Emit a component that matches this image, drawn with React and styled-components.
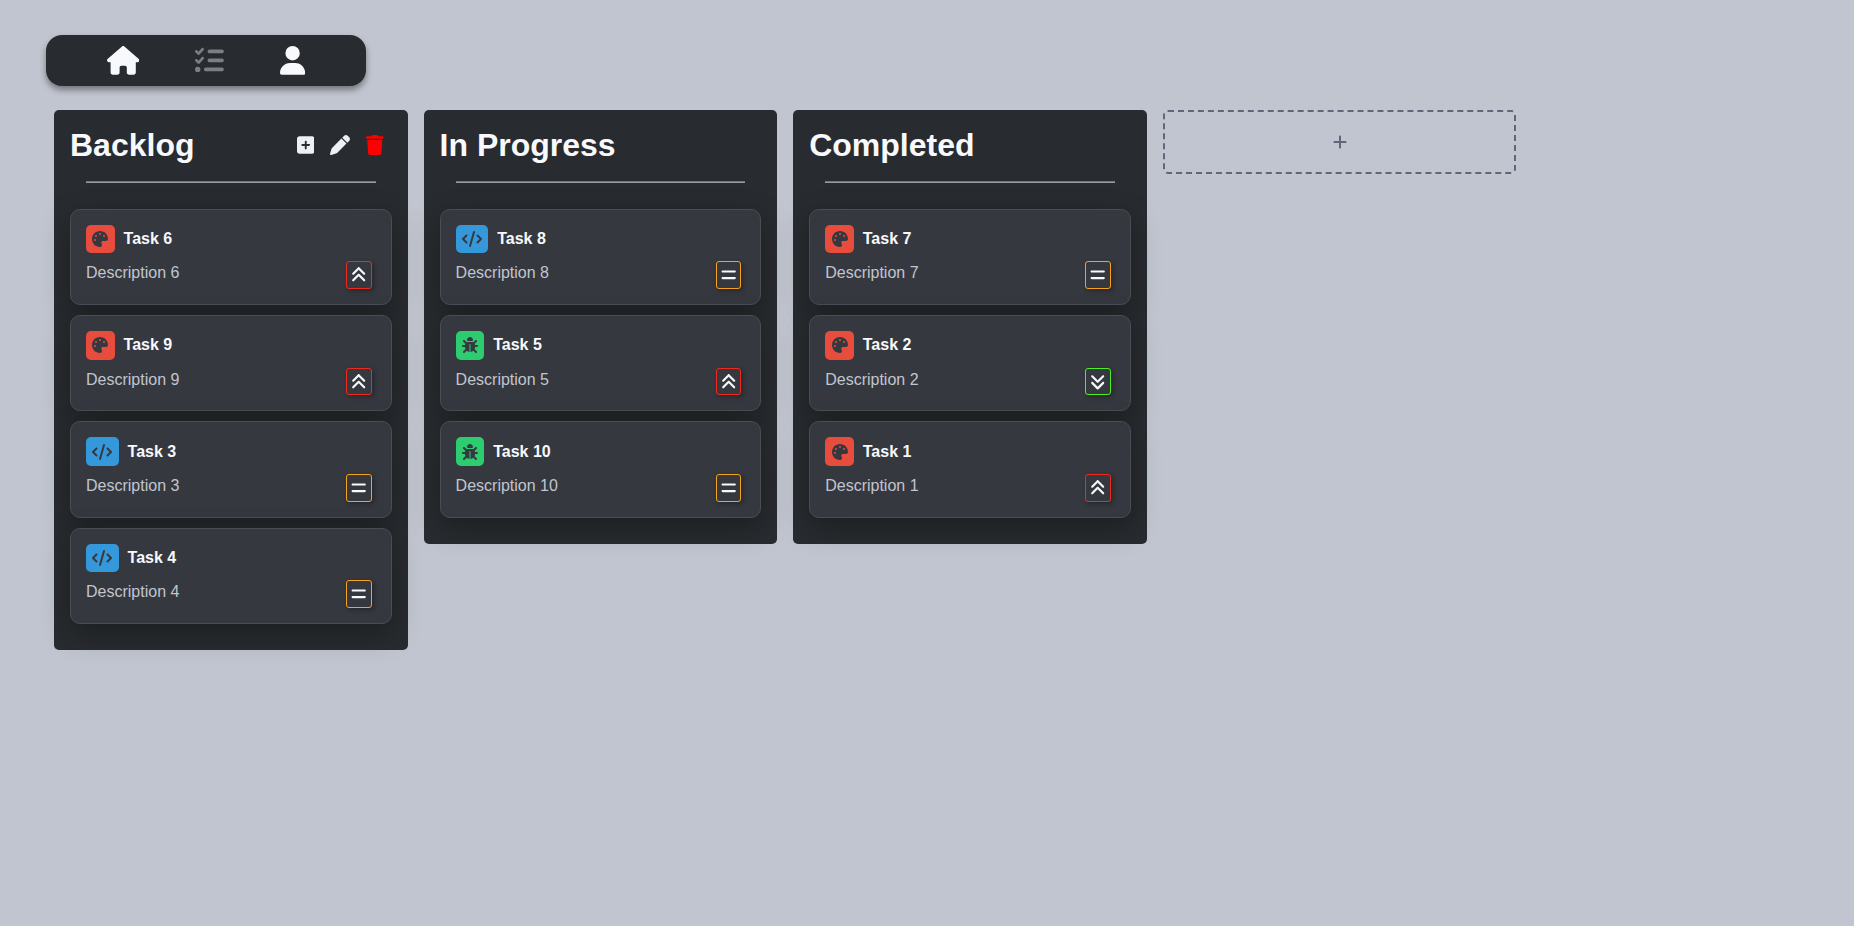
import React from "react";
import styled, { createGlobalStyle } from "styled-components";
import {
  FaHouse,
  FaListCheck,
  FaUser,
  FaSquarePlus,
  FaPen,
  FaTrash,
  FaPalette,
  FaCode,
  FaBug,
  FaAnglesUp,
  FaAnglesDown,
  FaEquals,
  FaPlus,
} from "react-icons/fa6";

const GlobalStyle = createGlobalStyle`
  * { box-sizing: border-box; margin: 0; padding: 0; }
  body {
    background: #c1c5cf;
    color: #f8f9fc;
    font-family: "Liberation Sans", Arial, sans-serif;
    font-size: 16px;
    min-height: 100vh;
  }
`;

/* Holds one glyph; $ratio is the glyph's width in em. */
const Glyph = styled.span`
  display: block;
  font-size: ${(p) => p.$size}px;
  width: ${(p) => p.$ratio ?? 1}em;
  height: 1em;

  svg {
    display: block;
    width: 100%;
    height: 100%;
  }
`;

const Page = styled.div`
  padding: 35px 46px;
`;

const NavBar = styled.nav`
  display: flex;
  align-items: center;
  justify-content: space-between;
  width: 320px;
  height: 51px;
  padding: 0 61px;
  border-radius: 16px;
  background: #282b2f;
  box-shadow: 0 4px 6px rgba(0, 0, 0, 0.4);
`;

const NavItem = styled.a`
  color: ${(p) => (p.$muted ? "#7b8087" : "#f8f9fc")};
`;

const Board = styled.main`
  display: flex;
  align-items: flex-start;
  gap: 16px;
  padding: 24px 8px;
`;

const Column = styled.section`
  width: 353.6px;
  padding: 16px 16px 26px;
  border-radius: 5px;
  background: #282b2f;
`;

const ColumnHeader = styled.header`
  display: flex;
  align-items: center;
  justify-content: space-between;
  height: 38px;
  padding-right: 8px;
`;

const ColumnTitle = styled.h1`
  margin-top: 1px;
  font-size: 32px;
  line-height: 37px;
  font-weight: 700;
`;

const Actions = styled.div`
  display: flex;
  align-items: center;
  gap: 16px;
`;

const Action = styled.button`
  border: 0;
  background: none;
  color: ${(p) => (p.$danger ? "#ff0000" : "#eff0f4")};
`;

const Divider = styled.hr`
  height: 2px;
  margin: 17px 16px 25.6px;
  border: 0;
  border-top: 1px solid #767676;
  background: #9a9a9a;
`;

const CardList = styled.div`
  display: flex;
  flex-direction: column;
  gap: 10px;
`;

const Card = styled.article`
  height: 96.35px;
  padding: 15px;
  border: 1px solid #494d54;
  border-radius: 10px;
  background: #36383f;
  box-shadow: 0 10px 30px rgba(0, 0, 0, 0.28);
`;

const CardHeader = styled.div`
  display: flex;
  align-items: center;
  gap: 8.8px;
  height: 28.8px;
`;

const TypeBadge = styled.span`
  padding: 6.4px;
  border-radius: 5px;
  background: ${(p) => p.$color};
  color: #36383f;
`;

const CardTitle = styled.h2`
  font-size: 16px;
  line-height: 18px;
  font-weight: 700;
`;

const CardBody = styled.div`
  display: flex;
  align-items: flex-start;
  justify-content: space-between;
  padding: 7.9px 4px 0 0;
`;

const Description = styled.p`
  margin-top: 3px;
  line-height: 18px;
  color: #c1c5cf;
`;

const PriorityBadge = styled.span`
  padding: 4px;
  border: 1px solid ${(p) => p.$color};
  border-radius: 3px;
  box-shadow: 2px 2px 5px rgba(0, 0, 0, 0.3);
`;

const AddColumn = styled.button`
  display: flex;
  align-items: center;
  justify-content: center;
  width: 353.6px;
  height: 64px;
  border: 2px dashed #62667a;
  border-radius: 5px;
  background: none;
  color: #62667a;
`;

const types = {
  design: { color: "#e74c3c", Icon: FaPalette, ratio: 1 },
  code: { color: "#3498db", Icon: FaCode, ratio: 1.25 },
  bug: { color: "#2ecc71", Icon: FaBug, ratio: 1 },
};

const priorities = {
  high: { color: "#f0281e", Icon: FaAnglesUp },
  medium: { color: "#f5a31a", Icon: FaEquals },
  low: { color: "#4cf01e", Icon: FaAnglesDown },
};

const columns = [
  {
    title: "Backlog",
    active: true,
    tasks: [
      [6, "design", "high"],
      [9, "design", "high"],
      [3, "code", "medium"],
      [4, "code", "medium"],
    ],
  },
  {
    title: "In Progress",
    tasks: [
      [8, "code", "medium"],
      [5, "bug", "high"],
      [10, "bug", "medium"],
    ],
  },
  {
    title: "Completed",
    tasks: [
      [7, "design", "medium"],
      [2, "design", "low"],
      [1, "design", "high"],
    ],
  },
];

function TaskCard({ id, type, priority }) {
  const { color, Icon, ratio } = types[type];
  const { color: edge, Icon: PriorityIcon } = priorities[priority];
  return (
    <Card>
      <CardHeader>
        <TypeBadge $color={color}>
          <Glyph $size={16} $ratio={ratio}><Icon /></Glyph>
        </TypeBadge>
        <CardTitle>Task {id}</CardTitle>
      </CardHeader>
      <CardBody>
        <Description>Description {id}</Description>
        <PriorityBadge $color={edge}>
          <Glyph $size={17.6} $ratio={0.875}><PriorityIcon /></Glyph>
        </PriorityBadge>
      </CardBody>
    </Card>
  );
}

export default function App() {
  return (
    <>
      <GlobalStyle />
      <Page>
        <NavBar>
          <NavItem>
            <Glyph $size={28.8} $ratio={1.125}><FaHouse /></Glyph>
          </NavItem>
          <NavItem $muted>
            <Glyph $size={28.8}><FaListCheck /></Glyph>
          </NavItem>
          <NavItem>
            <Glyph $size={28.8} $ratio={0.875}><FaUser /></Glyph>
          </NavItem>
        </NavBar>
        <Board>
          {columns.map((c) => (
            <Column key={c.title}>
              <ColumnHeader>
                <ColumnTitle>{c.title}</ColumnTitle>
                {c.active && (
                  <Actions>
                    <Action>
                      <Glyph $size={20} $ratio={0.875}><FaSquarePlus /></Glyph>
                    </Action>
                    <Action>
                      <Glyph $size={20}><FaPen /></Glyph>
                    </Action>
                    <Action $danger>
                      <Glyph $size={20} $ratio={0.875}><FaTrash /></Glyph>
                    </Action>
                  </Actions>
                )}
              </ColumnHeader>
              <Divider />
              <CardList>
                {c.tasks.map(([id, type, priority]) => (
                  <TaskCard key={id} id={id} type={type} priority={priority} />
                ))}
              </CardList>
            </Column>
          ))}
          <AddColumn>
            <Glyph $size={16} $ratio={0.875}><FaPlus /></Glyph>
          </AddColumn>
        </Board>
      </Page>
    </>
  );
}
